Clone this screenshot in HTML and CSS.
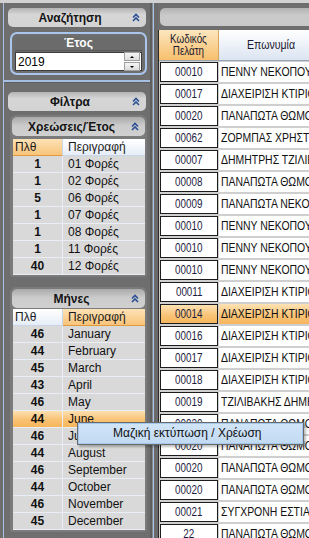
FILE: index.html
```html
<!DOCTYPE html>
<html lang="el">
<head>
    <meta charset="UTF-8">
    <title>Χρεώσεις πελατών</title>
    <link rel="stylesheet" href="styles.css">
</head>
<body>
    <div class="top-strip"></div>
    <div class="main">
        <div class="left">
            <section class="pane pane-search">
                <div class="bar">
                    <span class="bar-title">Αναζήτηση</span>
                    <svg class="chev" viewBox="0 0 8 9"><path d="M1 4.5L4 1.5L7 4.5M1 8L4 5L7 8" fill="none" stroke="#2b4f95" stroke-width="1.6"/></svg>
                </div>
                <div class="groupbox">
                    <div class="gb-title">Έτος</div>
                    <div class="spin">
                        <span>2019</span>
                        <div class="spin-btns">
                            <i class="spin-btn up"></i>
                            <i class="spin-btn down"></i>
                        </div>
                    </div>
                </div>
            </section>
            <div class="hsplit"></div>
            <section class="pane pane-filters">
                <div class="bar">
                    <span class="bar-title">Φίλτρα</span>
                    <svg class="chev" viewBox="0 0 8 9"><path d="M1 4.5L4 1.5L7 4.5M1 8L4 5L7 8" fill="none" stroke="#2b4f95" stroke-width="1.6"/></svg>
                </div>

                <div class="sub">
                    <div class="bar sub-bar">
                        <span class="bar-title">Χρεώσεις/Έτος</span>
                        <svg class="chev" viewBox="0 0 8 9"><path d="M1 4.5L4 1.5L7 4.5M1 8L4 5L7 8" fill="none" stroke="#2b4f95" stroke-width="1.6"/></svg>
                    </div>
                    <div class="mini-grid">
                        <div class="mg-head">
                            <div class="mg-c1 sorted">Πλθ</div>
                            <div class="mg-c2">Περιγραφή</div>
                        </div>
                        <div class="mg-row"><div class="mg-c1">1</div><div class="mg-c2">01 Φορές</div></div>
                        <div class="mg-row"><div class="mg-c1">1</div><div class="mg-c2">02 Φορές</div></div>
                        <div class="mg-row"><div class="mg-c1">5</div><div class="mg-c2">06 Φορές</div></div>
                        <div class="mg-row"><div class="mg-c1">1</div><div class="mg-c2">07 Φορές</div></div>
                        <div class="mg-row"><div class="mg-c1">1</div><div class="mg-c2">08 Φορές</div></div>
                        <div class="mg-row"><div class="mg-c1">1</div><div class="mg-c2">11 Φορές</div></div>
                        <div class="mg-row"><div class="mg-c1">40</div><div class="mg-c2">12 Φορές</div></div>
                    </div>
                </div>

                <div class="sub sub-months">
                    <div class="bar sub-bar">
                        <span class="bar-title">Μήνες</span>
                        <svg class="chev" viewBox="0 0 8 9"><path d="M1 4.5L4 1.5L7 4.5M1 8L4 5L7 8" fill="none" stroke="#2b4f95" stroke-width="1.6"/></svg>
                    </div>
                    <div class="mini-grid">
                        <div class="mg-head">
                            <div class="mg-c1">Πλθ</div>
                            <div class="mg-c2 sorted">Περιγραφή</div>
                        </div>
                        <div class="mg-row"><div class="mg-c1">46</div><div class="mg-c2">January</div></div>
                        <div class="mg-row"><div class="mg-c1">44</div><div class="mg-c2">February</div></div>
                        <div class="mg-row"><div class="mg-c1">45</div><div class="mg-c2">March</div></div>
                        <div class="mg-row"><div class="mg-c1">43</div><div class="mg-c2">April</div></div>
                        <div class="mg-row"><div class="mg-c1">46</div><div class="mg-c2">May</div></div>
                        <div class="mg-row sel"><div class="mg-c1">44</div><div class="mg-c2">June</div></div>
                        <div class="mg-row"><div class="mg-c1">46</div><div class="mg-c2">July</div></div>
                        <div class="mg-row"><div class="mg-c1">44</div><div class="mg-c2">August</div></div>
                        <div class="mg-row"><div class="mg-c1">46</div><div class="mg-c2">September</div></div>
                        <div class="mg-row"><div class="mg-c1">44</div><div class="mg-c2">October</div></div>
                        <div class="mg-row"><div class="mg-c1">46</div><div class="mg-c2">November</div></div>
                        <div class="mg-row"><div class="mg-c1">45</div><div class="mg-c2">December</div></div>
                    </div>
                </div>
            </section>
        </div>

        <div class="vsplit"></div>

        <div class="right">
            <div class="groupby"></div>
            <div class="grid">
                <div class="grid-head">
                    <div class="gh-code"><span class="nar">Κωδικός<br>Πελάτη</span></div>
                    <div class="gh-name"><span class="nar">Επωνυμία</span></div>
                </div>
                <div class="grid-row"><div class="gc-code"><span class="nar">00010</span></div><div class="gc-name"><span class="nar">ΠΕΝΝΥ ΝΕΚΟΠΟΥΛΟΥ</span></div></div>
                <div class="grid-row"><div class="gc-code"><span class="nar">00017</span></div><div class="gc-name"><span class="nar">ΔΙΑΧΕΙΡΙΣΗ ΚΤΙΡΙΟΥ</span></div></div>
                <div class="grid-row"><div class="gc-code"><span class="nar">00020</span></div><div class="gc-name"><span class="nar">ΠΑΝΑΠΩΤΑ ΘΩΜΟΠΟΥΛΟΥ</span></div></div>
                <div class="grid-row"><div class="gc-code"><span class="nar">00062</span></div><div class="gc-name"><span class="nar">ΖΟΡΜΠΑΣ ΧΡΗΣΤΟΣ</span></div></div>
                <div class="grid-row"><div class="gc-code"><span class="nar">00007</span></div><div class="gc-name"><span class="nar">ΔΗΜΗΤΡΗΣ ΤΖΙΛΙΒΑΚΗΣ</span></div></div>
                <div class="grid-row"><div class="gc-code"><span class="nar">00008</span></div><div class="gc-name"><span class="nar">ΠΑΝΑΠΩΤΑ ΘΩΜΟΠΟΥΛΟΥ</span></div></div>
                <div class="grid-row"><div class="gc-code"><span class="nar">00009</span></div><div class="gc-name"><span class="nar">ΠΑΝΑΠΩΤΑ ΝΕΚΟΠΟΥΛΟΥ</span></div></div>
                <div class="grid-row"><div class="gc-code"><span class="nar">00010</span></div><div class="gc-name"><span class="nar">ΠΕΝΝΥ ΝΕΚΟΠΟΥΛΟΥ</span></div></div>
                <div class="grid-row"><div class="gc-code"><span class="nar">00010</span></div><div class="gc-name"><span class="nar">ΠΕΝΝΥ ΝΕΚΟΠΟΥΛΟΥ</span></div></div>
                <div class="grid-row"><div class="gc-code"><span class="nar">00010</span></div><div class="gc-name"><span class="nar">ΠΕΝΝΥ ΝΕΚΟΠΟΥΛΟΥ</span></div></div>
                <div class="grid-row"><div class="gc-code"><span class="nar">00011</span></div><div class="gc-name"><span class="nar">ΔΙΑΧΕΙΡΙΣΗ ΚΤΙΡΙΟΥ</span></div></div>
                <div class="grid-row sel"><div class="gc-code"><span class="nar">00014</span></div><div class="gc-name"><span class="nar">ΔΙΑΧΕΙΡΙΣΗ ΚΤΙΡΙΟΥ</span></div></div>
                <div class="grid-row"><div class="gc-code"><span class="nar">00016</span></div><div class="gc-name"><span class="nar">ΔΙΑΧΕΙΡΙΣΗ ΚΤΙΡΙΟΥ</span></div></div>
                <div class="grid-row"><div class="gc-code"><span class="nar">00017</span></div><div class="gc-name"><span class="nar">ΔΙΑΧΕΙΡΙΣΗ ΚΤΙΡΙΟΥ</span></div></div>
                <div class="grid-row"><div class="gc-code"><span class="nar">00018</span></div><div class="gc-name"><span class="nar">ΔΙΑΧΕΙΡΙΣΗ ΚΤΙΡΙΟΥ</span></div></div>
                <div class="grid-row"><div class="gc-code"><span class="nar">00019</span></div><div class="gc-name"><span class="nar">ΤΖΙΛΙΒΑΚΗΣ ΔΗΜΗΤΡΗΣ</span></div></div>
                <div class="grid-row"><div class="gc-code"><span class="nar">00020</span></div><div class="gc-name"><span class="nar">ΠΑΝΑΠΩΤΑ ΘΩΜΟΠΟΥΛΟΥ</span></div></div>
                <div class="grid-row"><div class="gc-code"><span class="nar">00020</span></div><div class="gc-name"><span class="nar">ΠΑΝΑΠΩΤΑ ΘΩΜΟΠΟΥΛΟΥ</span></div></div>
                <div class="grid-row"><div class="gc-code"><span class="nar">00020</span></div><div class="gc-name"><span class="nar">ΠΑΝΑΠΩΤΑ ΘΩΜΟΠΟΥΛΟΥ</span></div></div>
                <div class="grid-row"><div class="gc-code"><span class="nar">00020</span></div><div class="gc-name"><span class="nar">ΠΑΝΑΠΩΤΑ ΘΩΜΟΠΟΥΛΟΥ</span></div></div>
                <div class="grid-row"><div class="gc-code"><span class="nar">00021</span></div><div class="gc-name"><span class="nar">ΣΥΓΧΡΟΝΗ ΕΣΤΙΑΣΗ</span></div></div>
                <div class="grid-row"><div class="gc-code"><span class="nar">22</span></div><div class="gc-name"><span class="nar">ΠΑΝΑΠΩΤΑ ΘΩΜΟΠΟΥΛΟΥ</span></div></div>
            </div>
        </div>
    </div>

    <!-- context menu opened over the months list -->
    <div class="ctx-menu">Μαζική εκτύπωση / Χρέωση</div>
</body>
</html>
```

FILE: styles.css
```css
body {
    margin: 0;
    width: 309px;
    height: 538px;
    overflow: hidden;
    background: #6e6e6e;
    font-family: "Liberation Sans", Arial, sans-serif;
    font-size: 12px;
    color: #111;
    position: relative;
}
.top-strip {
    height: 3px;
    background: #d2d2d2;
}
.main {
    display: flex;
    height: 535px;
    padding-left: 3px;
}

/* left column */
.left {
    width: 146px;
    border-left: 1px solid #a9c1e2;
    flex-shrink: 0;
}
.pane {
    padding: 5px 4px 0 4px;
}
.pane-search {
    height: 77px;
    box-sizing: border-box;
}
.pane-filters {
    padding-top: 7px;
}
.bar {
    height: 19px;
    display: flex;
    align-items: center;
    padding-right: 6px;
    border-radius: 5px;
    background: linear-gradient(#b4b4b4, #d6d6d6 35%, #d3d3d3);
    font-weight: bold;
    color: #141414;
}
.bar-title {
    flex: 1;
    text-align: center;
}
.chev {
    width: 8px;
    height: 9px;
}
.groupbox {
    margin: 5px -1px 0 2px;
    border: 2px solid #aac6ed;
    border-radius: 7px;
    padding: 3px 3px 2px 3px;
}
.gb-title {
    height: 13px;
    line-height: 13px;
    background: #6b6b6b;
    border-bottom: 1px solid #585858;
    color: #fff;
    font-weight: bold;
    text-align: center;
}
.spin {
    margin-top: 1px;
    height: 19px;
    box-sizing: border-box;
    display: flex;
    align-items: center;
    padding-left: 2px;
    background: #fff;
    border: 1px solid #3c3c3c;
    color: #000;
}
.spin-btns {
    margin-left: auto;
    margin-right: 1px;
    width: 16px;
    display: flex;
    flex-direction: column;
    gap: 1px;
}
.spin-btn {
    height: 7px;
    border: 1px solid #a0a0a0;
    background: linear-gradient(#f6f6f6, #dcdcdc);
    display: flex;
    align-items: center;
    justify-content: center;
}
.spin-btn::after {
    content: "";
    border-left: 2px solid transparent;
    border-right: 2px solid transparent;
}
.spin-btn.up::after {
    border-bottom: 2px solid #000;
}
.spin-btn.down::after {
    border-top: 2px solid #000;
}
.hsplit {
    height: 5px;
    background: linear-gradient(#a6c0e4 0 2px, #5e5e5e 2px 3px, #6e6e6e 3px);
}

.sub {
    margin: 4px -1px 0 2px;
    padding: 2px;
    background: #7b7b7b;
    border-radius: 6px 6px 3px 3px;
}
.sub-months {
    margin-top: 10px;
}
.sub-bar {
    background: linear-gradient(#a9a9a9, #cbcbcb 45%, #d0d0d0);
}
.mini-grid {
    margin: 3px 0 0 1px;
}
.sub-months .mini-grid {
    margin-top: 1px;
}
.mg-head,
.mg-row {
    display: grid;
    grid-template-columns: 50px 1fr;
    height: 17px;
    line-height: 16px;
}
.mg-head {
    background: linear-gradient(#ffffff, #e6edf7);
    border-bottom: 1px solid #c9d6e8;
    box-sizing: border-box;
    color: #1a1a1a;
}
.mg-head .mg-c1 {
    padding-left: 2px;
    border-right: 1px solid #c9d6e8;
}
.mg-head .mg-c2 {
    padding-left: 5px;
}
.mg-head .sorted {
    background: linear-gradient(#fde2b6, #f8c47a);
    border-bottom: 1px solid #e29a3c;
}
.mg-row {
    background: #d9d9d9;
    border-bottom: 1px solid #e9eef6;
    box-sizing: border-box;
    color: #111;
}
.mg-row .mg-c1 {
    text-align: center;
    font-weight: bold;
    border-right: 1px solid #e9eef6;
}
.mg-row .mg-c2 {
    padding-left: 5px;
}
.mg-row.sel {
    background: linear-gradient(#fde0b0, #f9c274 55%, #f7b55a);
}

/* splitter between the two halves */
.vsplit {
    width: 8px;
    flex-shrink: 0;
    background: linear-gradient(to right, #5e5e5e 0 2px, #8a8a8a 2px 3px, #a9c4ea 3px 4px, #6a6a6a 4px);
}

/* right column */
.right {
    flex: 1;
    min-width: 0;
    overflow: hidden;
    padding-top: 5px;
}
.groupby {
    height: 18px;
    margin-left: 2px;
    border-radius: 5px 0 0 5px;
    background: linear-gradient(#b2b2b2, #cacaca 40%, #c8c8c8);
}
.grid {
    margin-top: 4px;
    border-left: 1px solid #2a2a2a;
}
.grid-head,
.grid-row {
    display: grid;
    grid-template-columns: 60px 1fr;
}
/* the grid font is a narrow face: squeeze the regular one */
.nar {
    display: inline-block;
    white-space: nowrap;
    transform: scaleX(0.82);
    transform-origin: left center;
}
.gh-code .nar,
.gc-code .nar {
    transform-origin: center center;
}
.gc-name .nar {
    transform: scaleX(0.87);
}
.grid-head {
    height: 31px;
    border-bottom: 1px solid #9aa4b2;
    box-sizing: border-box;
}
.gh-code {
    background: linear-gradient(#fde6bf, #f7bf6c);
    border-right: 1px solid #d9a55c;
    text-align: center;
    line-height: 12px;
    padding-top: 3px;
    color: #1a1a30;
}
.gh-name {
    background: linear-gradient(#ffffff, #dbe4f1);
    padding-left: 28px;
    line-height: 30px;
    white-space: nowrap;
    color: #1a1a30;
}
.gh-name .nar {
    transform: scaleX(0.88);
}
.grid-row {
    height: 22px;
    background: #cfcfcf;
}
.gc-code {
    margin: 1px;
    border: 1px solid #1c1c1c;
    background: #fff;
    text-align: center;
    line-height: 18px;
    color: #1c1c40;
}
.gc-name {
    margin: 1px 0;
    padding-left: 2px;
    background: #fff;
    line-height: 20px;
    white-space: nowrap;
    overflow: hidden;
    color: #111;
}
.grid-row.sel .gc-code,
.grid-row.sel .gc-name {
    background: linear-gradient(#fde2b4, #f9c478 55%, #f7b65c);
}

.ctx-menu {
    position: absolute;
    left: 77px;
    top: 422px;
    width: 227px;
    height: 23px;
    box-sizing: border-box;
    padding-left: 35px;
    line-height: 21px;
    border: 1px solid #6a6a6a;
    background: linear-gradient(#d2e5f8, #c1d9f2);
    box-shadow: inset 0 0 0 1px #a5c8ee, 2px 2px 2px rgba(0, 0, 0, 0.25);
    color: #101010;
    white-space: nowrap;
}
```
